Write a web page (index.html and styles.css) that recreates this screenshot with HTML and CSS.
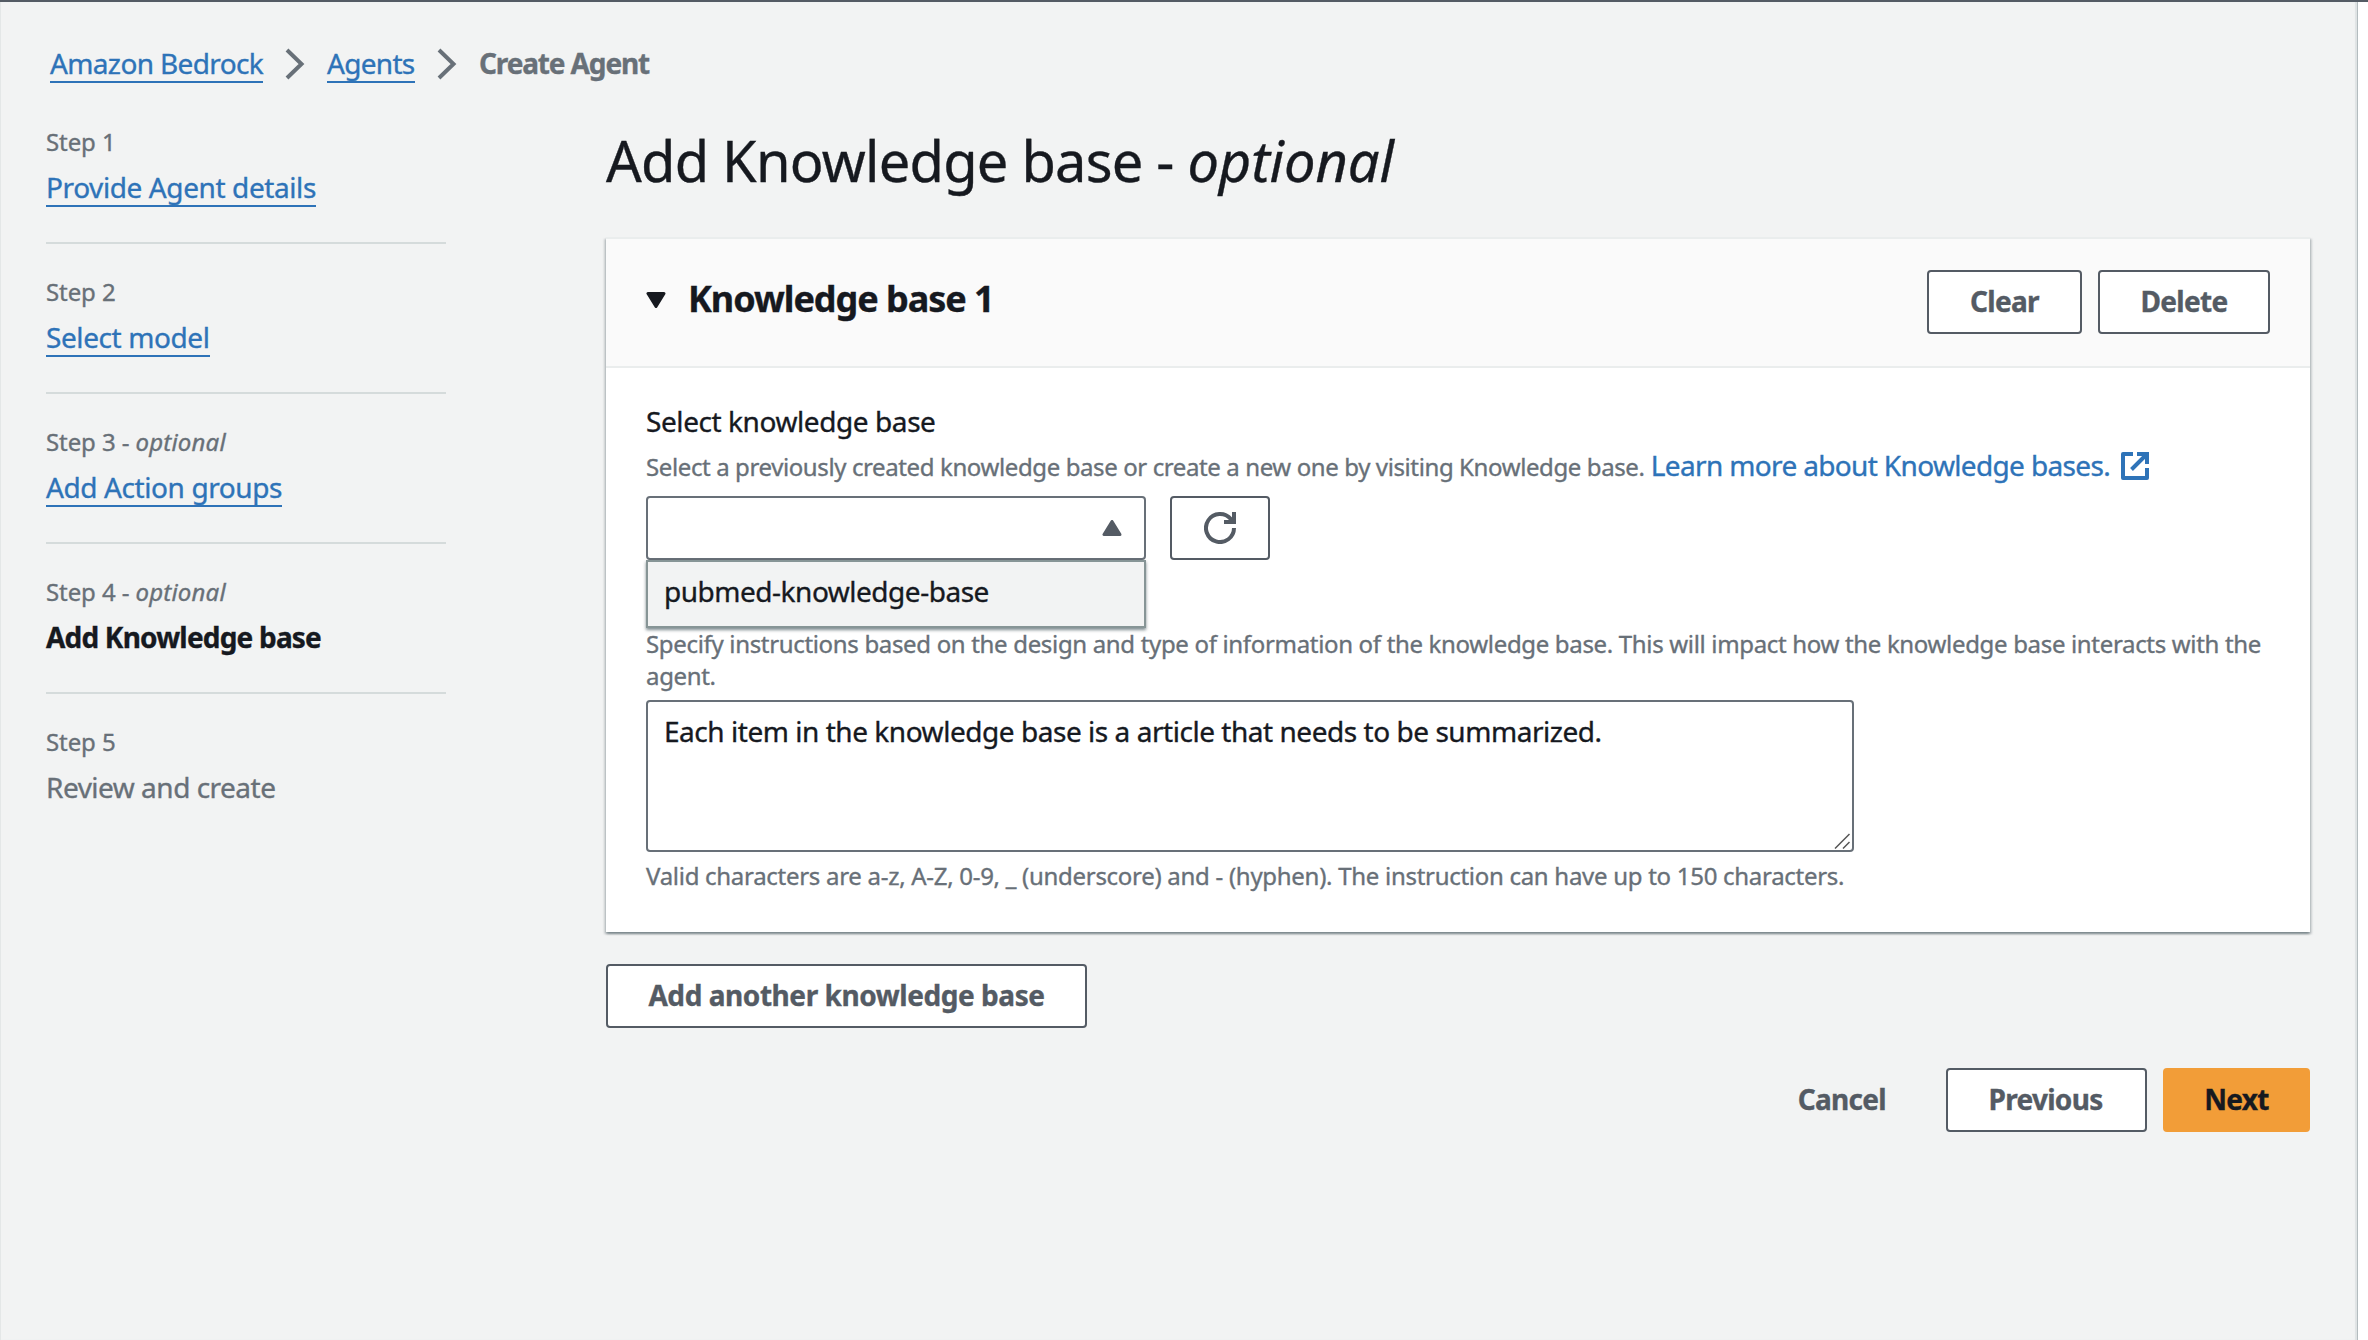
FILE: index.html
```html
<!DOCTYPE html>
<html lang="en">
<head>
<meta charset="utf-8">
<title>Create Agent - Add Knowledge base</title>
<link rel="stylesheet" href="styles.css">
</head>
<body>
<div class="page">
  <nav class="breadcrumbs" aria-label="Breadcrumbs">
    <a class="link crumb crumb-service">Amazon Bedrock</a>
    <svg class="chevron" viewBox="0 0 20 32"><path d="M2 2l14.500 14L2 30"/></svg>
    <a class="link crumb crumb-agents">Agents</a>
    <svg class="chevron" viewBox="0 0 20 32"><path d="M2 2l14.500 14L2 30"/></svg>
    <span class="crumb crumb-current">Create Agent</span>
  </nav>
  <div class="wizard">
    <ol class="steps">
      <li class="step">
        <div class="step-label">Step 1</div>
        <a class="link step-name">Provide Agent details</a>
      </li>
      <li class="step">
        <div class="step-label">Step 2</div>
        <a class="link step-name">Select model</a>
      </li>
      <li class="step">
        <div class="step-label">Step 3 - <i>optional</i></div>
        <a class="link step-name">Add Action groups</a>
      </li>
      <li class="step">
        <div class="step-label">Step 4 - <i>optional</i></div>
        <span class="step-name step-active">Add Knowledge base</span>
      </li>
      <li class="step">
        <div class="step-label">Step 5</div>
        <span class="step-name step-disabled">Review and create</span>
      </li>
    </ol>
    <main class="content">
      <h1 class="title">Add Knowledge base - <i class="title-optional">optional</i></h1>
      <section class="container">
        <header class="container-header">
          <svg class="caret" viewBox="0 0 20 16"><path d="M2 1.500h16l-8 13z"/></svg>
          <h2 class="container-title">Knowledge base 1</h2>
          <button class="button btn-clear">Clear</button>
          <button class="button btn-delete">Delete</button>
        </header>
        <div class="container-body">
          <div class="label">Select knowledge base</div>
          <div class="select-hint"><span class="hint-text">Select a previously created knowledge base or create a new one by visiting Knowledge base.</span> <a class="external">Learn more about Knowledge bases.<svg class="external-icon" viewBox="0 0 28 28"><path d="M12 2H2v24h24V16"/><path class="miter" d="M16 2h10v10M25 3L10.500 17.500"/></svg></a></div>
          <div class="select-row">
            <div class="select">
              <svg class="caret-up" viewBox="0 0 20 16"><path d="M2 14.500h16l-8-13z"/></svg>
              <div class="dropdown"><div class="option">pubmed-knowledge-base</div></div>
            </div>
            <button class="button btn-refresh" aria-label="Refresh"><svg class="refresh" viewBox="0 0 32 32"><path d="M30 16a14 14 0 1 1-3.200-8.900L29 10"/><path d="M30 0v10H20"/></svg></button>
          </div>
          <p class="instructions-hint">Specify instructions based on the design and type of information of the knowledge base. This will impact how the knowledge base interacts with the agent.</p>
          <div class="textarea">Each item in the knowledge base is a article that needs to be summarized.<svg class="resizer" viewBox="0 0 16 16"><path d="M1 15.500L15.500 1M9 15.500L15.500 9"/></svg></div>
          <p class="constraint">Valid characters are a-z, A-Z, 0-9, _ (underscore) and - (hyphen). The instruction can have up to 150 characters.</p>
        </div>
      </section>
      <button class="button btn-add">Add another knowledge base</button>
      <footer class="actions">
        <button class="button btn-cancel">Cancel</button>
        <button class="button btn-previous">Previous</button>
        <button class="button btn-next">Next</button>
      </footer>
    </main>
  </div>
</div>
</body>
</html>
```
FILE: styles.css
```css
* { box-sizing: border-box; }

body {
  margin: 0;
  background: #fff;
  color: #16191f;
  font-family: "Noto Sans", "Open Sans", sans-serif;
  font-size: 28px;
  -webkit-text-stroke: 0.350px;
}

h1, h2, p, ol { margin: 0; padding: 0; }

svg {
  display: block;
  flex: none;
  fill: none;
  stroke: currentColor;
  stroke-width: 4;
}

body::before {
  content: "";
  display: block;
  height: 2px;
  background: #545b64;
}

.page {
  width: 2358px;
  height: 1338px;
  padding: 43px 47px 0 44px;
  background: #f2f3f3;
  border-left: 1px solid #e4e7e7;
  border-right: 1px solid #b4bcbf;
  box-shadow: inset -2px 0 1px #dfe3e4;
}

.link {
  color: #2e73b8;
  border-bottom: 2px solid #2e73b8;
}

.breadcrumbs {
  display: flex;
  height: 38px;
  padding-left: 5px;
}

.crumb { line-height: 36px; white-space: nowrap; }
.crumb-service { width: 213px; letter-spacing: -0.640px; }
.crumb-agents { width: 88px; letter-spacing: -0.700px; }
.crumb-current { color: #687078; font-weight: 700; letter-spacing: -1.140px; }

.chevron {
  width: 20px;
  height: 32px;
  margin: 3px 22px 0;
  color: #687078;
}

.wizard {
  display: grid;
  grid-template-columns: 400px 1704px;
  column-gap: 160px;
  padding-left: 1px;
}

.steps {
  list-style: none;
  padding-top: 43px;
}

.step {
  display: flex;
  flex-direction: column;
  align-items: flex-start;
  padding-bottom: 35px;
  margin-bottom: 32px;
  border-bottom: 2px solid #d5dbdb;
}

.step:last-child { border-bottom: 0; }

.step-label {
  margin-bottom: 11px;
  color: #687078;
  font-size: 24px;
  line-height: 32px;
  letter-spacing: -0.100px;
}

.step-label i { letter-spacing: 0.200px; }

.step-name {
  height: 38px;
  line-height: 36px;
  letter-spacing: -0.400px;
  white-space: nowrap;
}

.step-active { font-weight: 700; letter-spacing: -0.800px; }
.step-disabled { color: #687078; letter-spacing: -0.500px; }

.content { padding-top: 42px; }

.title {
  height: 70px;
  margin-bottom: 42px;
  font-size: 56px;
  font-weight: 400;
  line-height: 70px;
  letter-spacing: -0.780px;
  white-space: nowrap;
}

.title-optional { letter-spacing: -0.100px; }

.container {
  background: #fff;
  border-top: 2px solid #eaeded;
  box-shadow: 0 2px 2px rgba(0, 28, 36, .3), 2px 2px 2px rgba(0, 28, 36, .15), -2px 2px 2px rgba(0, 28, 36, .15);
}

.container-header {
  display: flex;
  height: 129px;
  padding: 31px 40px 0 40px;
  background: #fafafa;
  border-bottom: 2px solid #eaeded;
}

.caret {
  width: 20px;
  height: 16px;
  margin-top: 22px;
}

.caret path, .caret-up path {
  fill: currentColor;
  stroke-width: 3;
  stroke-linejoin: round;
}

.container-title {
  flex: 1;
  margin: 4px 0 0 22px;
  font-size: 36px;
  line-height: 50px;
  letter-spacing: -1.050px;
}

.button {
  display: flex;
  align-items: center;
  justify-content: center;
  height: 64px;
  padding: 0 0 2px;
  background: #fff;
  border: 2px solid #545b64;
  border-radius: 4px;
  color: #545b64;
  font: 700 28px "Noto Sans", "Open Sans", sans-serif;
  letter-spacing: -0.700px;
  white-space: nowrap;
}

.btn-clear { width: 155px; margin-right: 16px; }
.btn-delete { width: 172px; }

.container-body { padding: 33px 40px 40px; }

.label {
  line-height: 40px;
  letter-spacing: -0.420px;
}

.select-hint {
  height: 53px;
  margin-top: 2px;
  color: #687078;
  font-size: 24px;
  line-height: 44px;
  white-space: nowrap;
}

.hint-text { letter-spacing: -0.390px; }

.external {
  color: #2e73b8;
  font-size: 28px;
  letter-spacing: -0.650px;
}

.external-icon {
  display: inline-block;
  width: 28px;
  height: 28px;
  margin-left: 11px;
  vertical-align: -4px;
  stroke-linejoin: round;
}

.external-icon .miter { stroke-linejoin: miter; }

.select-row { display: flex; gap: 24px; }

.select {
  position: relative;
  width: 500px;
  height: 64px;
  padding: 22px;
  border: 2px solid #687078;
  border-radius: 4px;
}

.caret-up {
  width: 20px;
  height: 16px;
  margin-left: auto;
  color: #545b64;
}

.dropdown {
  position: absolute;
  top: 62px;
  left: -2px;
  width: 500px;
  height: 68px;
  padding: 9px 16px;
  background: #f2f3f3;
  border: 2px solid #879596;
  box-shadow: 0 2px 3px rgba(0, 28, 36, .5);
}

.option {
  line-height: 40px;
  letter-spacing: -0.480px;
}

.btn-refresh { width: 100px; padding: 0; }
.refresh { width: 32px; height: 32px; }

.instructions-hint {
  margin-top: 68px;
  color: #687078;
  font-size: 24px;
  line-height: 32px;
  letter-spacing: -0.330px;
}

.textarea {
  position: relative;
  width: 1208px;
  height: 152px;
  margin-top: 8px;
  padding: 9px 16px;
  border: 2px solid #687078;
  border-radius: 4px;
  line-height: 40px;
  letter-spacing: -0.460px;
}

.resizer {
  position: absolute;
  right: 2px;
  bottom: 1px;
  width: 16px;
  height: 16px;
  color: #555;
  stroke-width: 1.500;
}

.constraint {
  margin-top: 8px;
  color: #687078;
  font-size: 24px;
  line-height: 32px;
  letter-spacing: -0.285px;
}

.btn-add {
  width: 481px;
  margin-top: 32px;
  letter-spacing: -0.440px;
}

.actions {
  display: flex;
  justify-content: flex-end;
  margin-top: 40px;
}

.btn-cancel {
  margin-right: 58px;
  background: none;
  border-color: transparent;
}

.btn-previous { width: 201px; margin-right: 16px; padding-right: 2px; }

.btn-next {
  width: 147px;
  background: #f29d38;
  border-color: #f29d38;
  color: #16191f;
}
```
